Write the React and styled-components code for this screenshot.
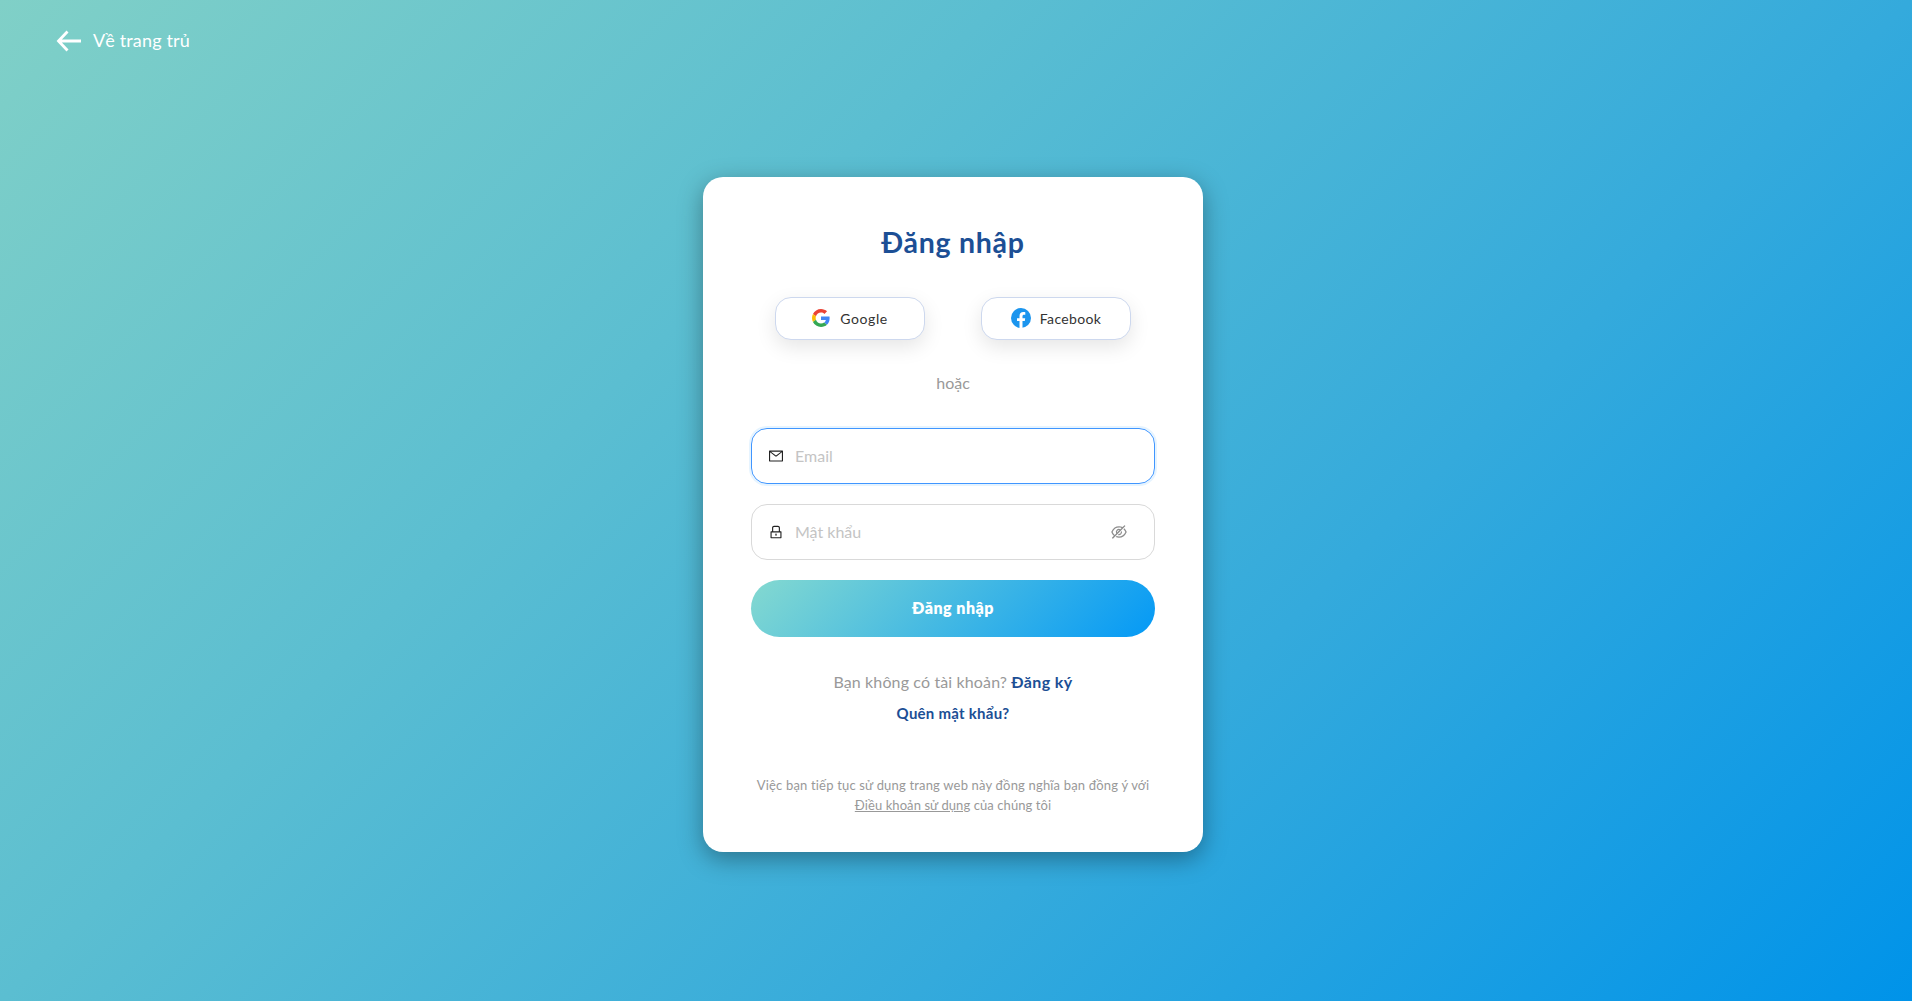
import React from "react";
import styled, { createGlobalStyle } from "styled-components";
import {
  AiOutlineMail,
  AiOutlineLock,
  AiOutlineEyeInvisible,
} from "react-icons/ai";

const GlobalStyle = createGlobalStyle`
  * { box-sizing: border-box; }
  body {
    margin: 0;
    font-family: Lato, "Noto Sans", sans-serif;
    overflow: hidden;
  }
`;

const Page = styled.div`
  display: flex;
  flex-direction: column;
  align-items: center;
  width: 100%;
  height: 1001px;
  padding-right: 6px;
  background: linear-gradient(135deg, #80d0c7 0%, #5bbed1 34.4%, #34aadc 65.6%, #0093e9 100%);
`;

const Header = styled.header`
  align-self: flex-start;
  height: 177px;
  padding: 26px 0 0 56px;
`;

const BackLink = styled.a`
  display: flex;
  align-items: center;
  gap: 11px;
  height: 30px;
  color: #fff;
  font-size: 18px;
  letter-spacing: 0.17px;
  line-height: 28px;
  white-space: nowrap;
  span { margin-top: -2px; }
`;

const Card = styled.main`
  display: flex;
  flex-direction: column;
  align-items: center;
  width: 500px;
  height: 675px;
  padding: 46px 48px 48px;
  border-radius: 20px;
  background: #fff;
  box-shadow: 0 7px 24px rgba(0, 0, 0, 0.35);
`;

const Title = styled.h1`
  margin: 0;
  height: 38px;
  line-height: 38px;
  font-size: 28.500px;
  letter-spacing: 0.72px;
  font-weight: 700;
  color: #1c4f95;
  white-space: nowrap;
`;

const SocialRow = styled.div`
  display: flex;
  gap: 56px;
  margin-top: 36px;
`;

const SocialButton = styled.button`
  display: flex;
  align-items: center;
  justify-content: center;
  gap: ${(p) => p.$gap};
  width: 150px;
  height: 43px;
  padding: 0 0 1px;
  border: 1px solid #cdd8ee;
  border-radius: 16px;
  background: #fff;
  box-shadow: 0 7px 20px rgba(0, 0, 0, 0.1);
  font-family: inherit;
  font-size: 14px;
  letter-spacing: ${(p) => p.$spacing};
  color: #333;
`;

const Divider = styled.p`
  margin: 30px 0 0;
  height: 26px;
  line-height: 26px;
  font-size: 16px;
  color: #999;
`;

const Form = styled.form`
  display: flex;
  flex-direction: column;
  gap: 20px;
  width: 100%;
  margin-top: 32px;
`;

const Field = styled.label`
  display: flex;
  align-items: center;
  height: 56px;
  padding: 0 26px 0 16px;
  border: 1px solid ${(p) => (p.$focused ? "#4096ff" : "#d9d9d9")};
  border-radius: 16px;
  box-shadow: ${(p) => (p.$focused ? "0 0 0 2px rgba(5, 145, 255, 0.1)" : "none")};
  color: #222;
`;

const FieldInput = styled.input`
  flex: 1;
  min-width: 0;
  margin-left: 11px;
  padding: 0 0 2px;
  border: 0;
  outline: 0;
  background: transparent;
  font-family: inherit;
  font-size: 16px;
  &::placeholder { color: #c4c4c4; opacity: 1; }
`;

const SubmitButton = styled.button`
  height: 57px;
  padding: 0 0 2px;
  border: 0;
  border-radius: 29px;
  background: linear-gradient(135deg, #84d9d0 0%, #0499f6 100%);
  color: #fff;
  font-family: inherit;
  font-size: 16px;
  letter-spacing: 0.5px;
  font-weight: 800;
`;

const Prompt = styled.p`
  margin: 32px 0 0;
  height: 26px;
  line-height: 26px;
  font-size: 16px;
  letter-spacing: 0.13px;
  color: #999;
  white-space: nowrap;
`;

const StrongLink = styled.a`
  color: #1c4f95;
  font-weight: 700;
  letter-spacing: 0.38px;
`;

const ForgotLink = styled.a`
  height: 22px;
  margin-top: 7px;
  line-height: 22px;
  font-size: 15px;
  letter-spacing: 0.26px;
  font-weight: 700;
  color: #1c4f95;
`;

const Terms = styled.p`
  margin: 51px 0 0;
  text-align: center;
  line-height: 20px;
  font-size: 13px;
  letter-spacing: 0.18px;
  color: #999;
  white-space: nowrap;
  span { letter-spacing: 0.08px; }
  a { text-decoration: underline; }
`;

const ArrowIcon = () => (
  <svg width="26" height="22" viewBox="0 0 26 22" fill="none" stroke="#fff" strokeWidth="2.8">
    <path d="M11.500 1.500 2.500 11l9 9.500M2.500 11H25" />
  </svg>
);

const GoogleIcon = () => (
  <svg width="18" height="18" viewBox="0 0 48 48">
    <path fill="#ea4335" d="M24 9.500c3.540 0 6.710 1.220 9.210 3.600l6.850-6.850C35.900 2.380 30.470 0 24 0 14.620 0 6.510 5.380 2.560 13.220l7.980 6.190C12.430 13.720 17.740 9.500 24 9.500z" />
    <path fill="#4285f4" d="M46.980 24.550c0-1.570-.15-3.090-.38-4.550H24v9.020h12.940c-.58 2.960-2.260 5.480-4.780 7.180l7.730 6c4.510-4.180 7.090-10.360 7.090-17.650z" />
    <path fill="#fbbc05" d="M10.530 28.590c-.48-1.450-.76-2.990-.76-4.590s.27-3.140.76-4.590l-7.980-6.190C.92 16.460 0 20.120 0 24c0 3.880.92 7.540 2.560 10.780z" />
    <path fill="#34a853" d="M24 48c6.480 0 11.930-2.130 15.890-5.810l-7.730-6c-2.150 1.450-4.920 2.300-8.160 2.300-6.260 0-11.570-4.220-13.470-9.910l-7.980 6.190C6.510 42.620 14.620 48 24 48z" />
  </svg>
);

const FacebookIcon = () => (
  <svg width="20" height="20" viewBox="0 0 20 20">
    <circle cx="10" cy="10" r="10" fill="#1b95ee" />
    <path
      fill="#fff"
      d="M8.500 20v-7H6v-2.800h2.500V8c0-2.500 1.500-3.900 3.700-3.900 1 0 2.100.2 2.100.2v2.400h-1.200c-1.200 0-1.600.7-1.600 1.500v2h2.700l-.4 2.800h-2.300v7z"
    />
  </svg>
);

export default function App() {
  return (
    <>
      <GlobalStyle />
      <Page>
        <Header>
          <BackLink>
            <ArrowIcon />
            <span>Về trang trủ</span>
          </BackLink>
        </Header>
        <Card>
          <Title>Đăng nhập</Title>
          <SocialRow>
            <SocialButton type="button" $gap="10px" $spacing="0.6px">
              <GoogleIcon />
              <span>Google</span>
            </SocialButton>
            <SocialButton type="button" $gap="9px" $spacing="0.33px">
              <FacebookIcon />
              <span>Facebook</span>
            </SocialButton>
          </SocialRow>
          <Divider>hoặc</Divider>
          <Form>
            <Field $focused>
              <AiOutlineMail size={16} />
              <FieldInput type="email" placeholder="Email" />
            </Field>
            <Field>
              <AiOutlineLock size={16} />
              <FieldInput type="password" placeholder="Mật khẩu" />
              <AiOutlineEyeInvisible size={18} color="#8c8c8c" />
            </Field>
            <SubmitButton type="button">Đăng nhập</SubmitButton>
          </Form>
          <Prompt>
            Bạn không có tài khoản? <StrongLink>Đăng ký</StrongLink>
          </Prompt>
          <ForgotLink>Quên mật khẩu?</ForgotLink>
          <Terms>
            Việc bạn tiếp tục sử dụng trang web này đồng nghĩa bạn đồng ý với
            <br />
            <span>
              <a>Điều khoản sử dụng</a> của chúng tôi
            </span>
          </Terms>
        </Card>
      </Page>
    </>
  );
}
